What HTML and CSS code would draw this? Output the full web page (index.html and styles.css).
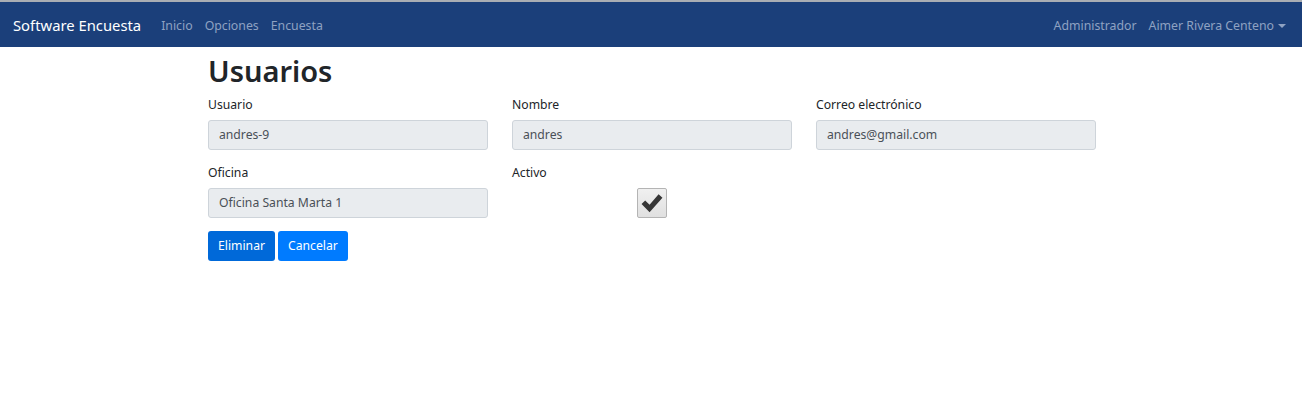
FILE: index.html
```html
<!DOCTYPE html>
<html lang="es">
<head>
<meta charset="utf-8">
<title>Usuarios</title>
<link rel="stylesheet" href="styles.css">
</head>
<body>
<div class="topline"></div>
<nav class="navbar">
  <a class="brand" href="#">Software Encuesta</a>
  <ul class="nav">
    <li><a href="#">Inicio</a></li>
    <li><a href="#">Opciones</a></li>
    <li><a href="#">Encuesta</a></li>
  </ul>
  <ul class="nav nav-right">
    <li><a href="#">Administrador</a></li>
    <li><a href="#" class="dropdown">Aimer Rivera Centeno</a></li>
  </ul>
</nav>
<main class="container">
  <h1 class="title">Usuarios</h1>
  <div class="row">
    <div class="field">
      <label>Usuario</label>
      <div class="input">andres-9</div>
    </div>
    <div class="field">
      <label>Nombre</label>
      <div class="input">andres</div>
    </div>
    <div class="field">
      <label>Correo electrónico</label>
      <div class="input">andres@gmail.com</div>
    </div>
  </div>
  <div class="row">
    <div class="field">
      <label>Oficina</label>
      <div class="input">Oficina Santa Marta 1</div>
    </div>
    <div class="field">
      <label>Activo</label>
      <div class="check-wrap">
        <span class="check">
          <svg width="22" height="20" viewBox="0 0 20 18"><path d="M0.5 10 L3.8 6.8 L7.8 10.6 L16 1 L19.5 4.3 L7.8 17.3 Z" fill="#363636"/></svg>
        </span>
      </div>
    </div>
  </div>
  <div class="actions">
    <button class="btn btn-dark">Eliminar</button>
    <button class="btn btn-primary">Cancelar</button>
  </div>
</main>
</body>
</html>
```
FILE: styles.css
```css
* { box-sizing: border-box; }
html, body { margin: 0; padding: 0; }
body {
  font-family: "Noto Sans", "Open Sans", sans-serif;
  font-size: 12.2px;
  color: #212529;
  background: #fff;
}
.topline { height: 2px; background: #a9adb3; }
.navbar {
  display: flex;
  align-items: center;
  height: 45px;
  background: #1b3f7a;
  padding: 1px 13px 0;
}
.brand {
  color: #fff;
  font-size: 14.8px;
  text-decoration: none;
  margin-right: 20px;
}
.nav {
  display: flex;
  list-style: none;
  margin: 0;
  padding: 0;
  gap: 12px;
}
.nav a {
  color: #8fa2c2;
  text-decoration: none;
  font-size: 12.3px;
}
.nav-right { margin-left: auto; gap: 12px; margin-right: 3px; }
.dropdown::after {
  content: "";
  display: inline-block;
  margin-left: 4px;
  vertical-align: 2px;
  border-top: 4px solid #8fa2c2;
  border-left: 4px solid transparent;
  border-right: 4px solid transparent;
}
.container {
  width: 888px;
  margin: 0 auto;
  transform: translateX(1px);
}
.title {
  font-size: 29px;
  font-weight: 600;
  margin: 7px 0 6px;
  line-height: 1.2;
}
.row {
  display: grid;
  grid-template-columns: repeat(3, 280px);
  column-gap: 24px;
  margin-bottom: 13px;
}
.field label {
  display: block;
  font-size: 12.2px;
  line-height: 18px;
  padding-top: 1px;
  margin-bottom: 6px;
}
.input {
  height: 30px;
  background: #e9ecef;
  border: 1px solid #ced4da;
  border-radius: 3px;
  padding: 0 10px;
  line-height: 28px;
  color: #495057;
  font-size: 12.2px;
}
.check-wrap {
  display: flex;
  justify-content: center;
  height: 30px;
  padding-right: 1px;
}
.check {
  width: 30px;
  height: 30px;
  border: 1px solid #b4b4b4;
  border-radius: 2px;
  background: linear-gradient(#f0f0f0, #e0e0e0);
  display: flex;
  align-items: center;
  justify-content: center;
}
.actions { display: flex; gap: 3px; margin-top: 1px; }
.btn {
  height: 30px;
  border: none;
  border-radius: 3px;
  color: #fff;
  font-family: inherit;
  font-size: 12.2px;
  padding: 0 10px;
  cursor: pointer;
}
.btn-dark { background: #0069d9; }
.btn-primary { background: #007bff; }
```
